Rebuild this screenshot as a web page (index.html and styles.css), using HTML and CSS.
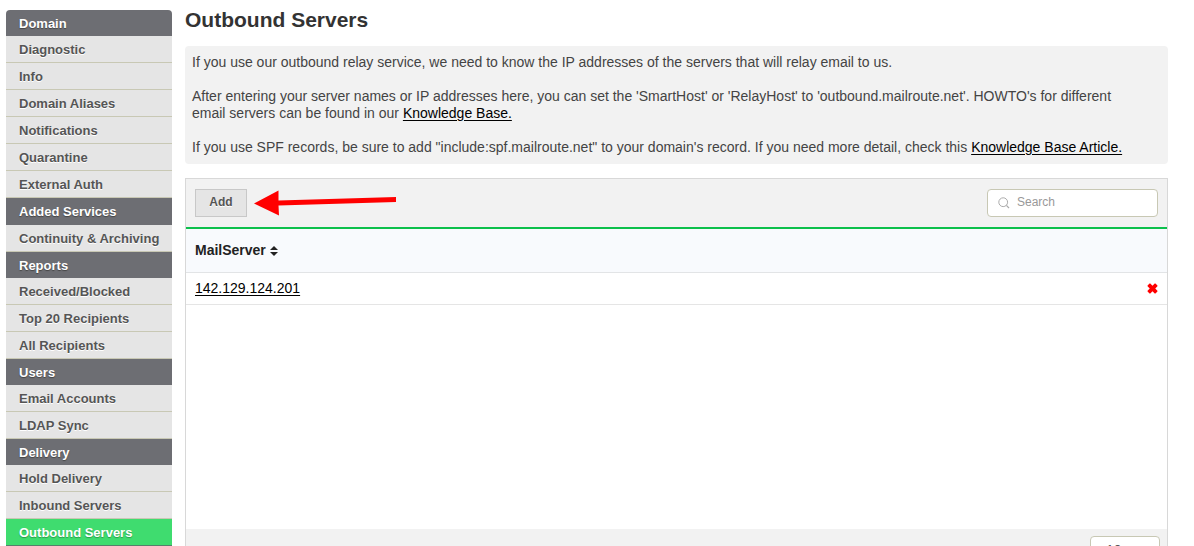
FILE: index.html
```html
<!DOCTYPE html>
<html lang="en">
<head>
<meta charset="utf-8">
<meta name="viewport" content="width=device-width, initial-scale=1">
<title>Outbound Servers</title>
<link rel="stylesheet" href="styles.css">
</head>
<body>
<div class="layout">
  <nav class="sidebar" aria-label="Domain settings">
    <h2 class="nav-title">Domain</h2>
    <a class="nav-link" href="#">Diagnostic</a>
    <a class="nav-link" href="#">Info</a>
    <a class="nav-link" href="#">Domain Aliases</a>
    <a class="nav-link" href="#">Notifications</a>
    <a class="nav-link" href="#">Quarantine</a>
    <a class="nav-link" href="#">External Auth</a>
    <h2 class="nav-title nav-title-tall">Added Services</h2>
    <a class="nav-link" href="#">Continuity &amp; Archiving</a>
    <h2 class="nav-title">Reports</h2>
    <a class="nav-link" href="#">Received/Blocked</a>
    <a class="nav-link" href="#">Top 20 Recipients</a>
    <a class="nav-link" href="#">All Recipients</a>
    <h2 class="nav-title">Users</h2>
    <a class="nav-link" href="#">Email Accounts</a>
    <a class="nav-link" href="#">LDAP Sync</a>
    <h2 class="nav-title">Delivery</h2>
    <a class="nav-link" href="#">Hold Delivery</a>
    <a class="nav-link" href="#">Inbound Servers</a>
    <a class="nav-link nav-link-active" href="#" aria-current="page">Outbound Servers</a>
  </nav>
  <main class="content">
    <h1 class="page-title">Outbound Servers</h1>
    <section class="help">
      <p>If you use our outbound relay service, we need to know the IP addresses of the servers that will relay email to us.</p>
      <p>After entering your server names or IP addresses here, you can set the 'SmartHost' or 'RelayHost' to 'outbound.mailroute.net'. HOWTO's for different email servers can be found in our <a href="#">Knowledge Base.</a></p>
      <p>If you use SPF records, be sure to add "include:spf.mailroute.net" to your domain's record. If you need more detail, check this <a href="#">Knowledge Base Article.</a></p>
    </section>
    <section class="panel">
      <div class="toolbar">
        <button class="add" type="button">Add</button>
        <svg class="arrow" viewBox="0 0 144 26" aria-hidden="true"><path d="M0 13.500 24.500 0.500 24.500 10.500 142 7 142 12 24.500 15.500 25 25.500Z" fill="#f00"/></svg>
        <label class="search">
          <svg class="search-icon" viewBox="0 0 12 12" aria-hidden="true"><circle cx="5.2" cy="5.2" r="4.4" fill="none" stroke="#aaa"/><path d="M8.400 8.400 11 11" stroke="#aaa" stroke-width="1.2"/></svg>
          <input class="search-input" type="search" placeholder="Search" aria-label="Search">
        </label>
      </div>
      <div class="list">
        <table class="servers">
          <thead>
            <tr><th scope="col" colspan="2">MailServer <svg class="sort" viewBox="0 0 8 10" aria-hidden="true"><path d="M0 4 4 0 8 4ZM0 6 8 6 4 10Z" fill="#222"/></svg></th></tr>
          </thead>
          <tbody>
            <tr>
              <td><a href="#">142.129.124.201</a></td>
              <td class="actions"><button class="remove" type="button" aria-label="Delete 142.129.124.201"><svg viewBox="0 0 10 10" aria-hidden="true"><path d="M2.3 0.5H3L5 2.5 7 0.5H7.7L9.5 2.3V3L7.5 5 9.5 7V7.7L7.7 9.5H7L5 7.5 3 9.5H2.3L0.5 7.7V7L2.5 5 0.5 3V2.3Z" fill="#f00"/></svg></button></td>
            </tr>
          </tbody>
        </table>
      </div>
      <div class="footer">
        <select class="page-size" aria-label="Rows per page"><option>10</option></select>
      </div>
    </section>
  </main>
</div>
</body>
</html>
```
FILE: styles.css
```css
* { box-sizing: border-box; }
html { scrollbar-width: none; }
body {
  margin: 0;
  background: #fff;
  color: #444;
  font: 14px/17px "Liberation Sans", Arial, sans-serif;
}
.layout {
  display: flex;
  align-items: flex-start;
  gap: 13px;
  padding: 10px 26px 0 6px;
}

.sidebar {
  flex: 0 0 166px;
  overflow: hidden;
  border-radius: 4px 4px 0 0;
}
.nav-title, .nav-link {
  display: block;
  margin: 0;
  padding: 2px 13px 0;
  font-size: 13px;
  font-weight: bold;
  line-height: 24px;
  white-space: nowrap;
}
.nav-title {
  background: #6d6e73;
  color: #fff;
  text-shadow: 0 1px 1px #444;
}
.nav-title-tall { padding-bottom: 1px; }
.nav-link {
  border-bottom: 1px solid #c8c8b4;
  background: #e5e5e5;
  color: #555;
  text-decoration: none;
  text-shadow: 0 1px 0 #fff;
}
.nav-link-active {
  border-bottom-color: #55806a;
  background: #3fdc6f;
  color: #fff;
  text-shadow: 0 1px 1px #2a9a4a;
}

.content { flex: 1; min-width: 0; }
.page-title {
  margin: 0 0 16px;
  color: #333;
  font-size: 21px;
  line-height: 20px;
}
.help {
  margin-bottom: 14px;
  padding: 8px 28px 8px 7px;
  border-radius: 4px;
  background: #f2f2f2;
}
.help p { margin: 0 0 17px; }
.help p:last-child { margin-bottom: 0; }
.help a, .servers a { color: #000; text-underline-offset: 2px; }

.panel { border: 1px solid #d8d8d8; }
.toolbar {
  display: flex;
  align-items: center;
  padding: 10px 9px;
  border-bottom: 2px solid #0cc04c;
  background: #f2f2f2;
}
.add {
  width: 52px;
  height: 28px;
  padding: 0 0 2px;
  border: 1px solid #c8c8c8;
  background: #e5e5e5;
  color: #555;
  font: bold 12px/17px "Liberation Sans", Arial, sans-serif;
  text-shadow: 0 1px 0 #fff;
}
.arrow { width: 144px; height: 26px; margin-left: 7px; }
.search {
  display: flex;
  align-items: center;
  gap: 7px;
  width: 171px;
  height: 28px;
  margin-left: auto;
  padding: 0 10px;
  border: 1px solid #c8c8b4;
  border-radius: 4px;
  background: #fff;
}
.search-icon { flex: none; width: 12px; height: 12px; }
.search-input {
  flex: 1;
  min-width: 0;
  padding: 0 0 1px;
  border: 0;
  outline: 0;
  background: none;
  color: #444;
  font: 12px/17px "Liberation Sans", Arial, sans-serif;
}
.search-input::placeholder { color: #999; }

.list { min-height: 300px; }
.servers { width: 100%; border-collapse: collapse; }
.servers th {
  height: 43px;
  padding: 1px 9px 0;
  border-bottom: 1px solid #e2e4e6;
  background: #f8fafd;
  color: #222;
  text-align: left;
}
.servers td {
  height: 32px;
  padding: 0 9px;
  border-bottom: 1px solid #e5e5e5;
}
.servers .actions { text-align: right; }
.sort { width: 8px; height: 10px; vertical-align: -1px; }
.remove {
  display: inline-flex;
  padding: 0;
  border: 0;
  background: none;
  vertical-align: middle;
}
.remove svg { width: 11px; height: 11px; }

.footer {
  display: flex;
  justify-content: flex-end;
  padding: 7px;
  background: #f2f2f2;
}
.page-size {
  width: 70px;
  height: 28px;
  padding: 0 15px;
  border: 1px solid #c8c8b4;
  border-radius: 4px;
  appearance: none;
  background: #fff;
  color: #555;
  font: 14px/17px "Liberation Sans", Arial, sans-serif;
}
```
